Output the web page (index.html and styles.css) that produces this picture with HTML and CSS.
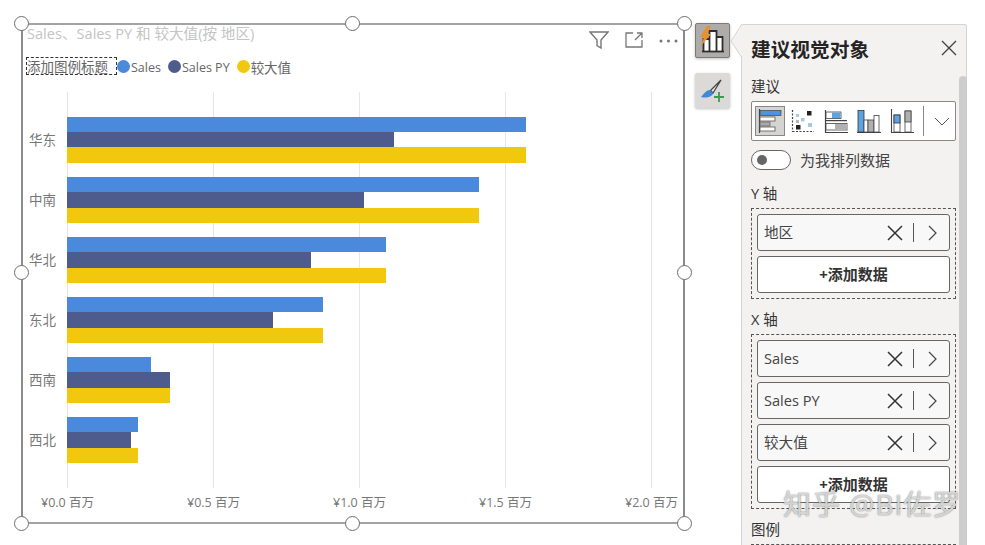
FILE: index.html
```html
<!DOCTYPE html>
<html lang="zh">
<head>
<meta charset="utf-8">
<title>建议视觉对象</title>
<link rel="stylesheet" href="styles.css">
</head>
<body>
<div class="stage">
  <section class="visual">
    <span class="handle h-tl"></span><span class="handle h-tm"></span><span class="handle h-tr"></span>
    <span class="handle h-ml"></span><span class="handle h-mr"></span>
    <span class="handle h-bl"></span><span class="handle h-bm"></span><span class="handle h-br"></span>

    <header class="visual-head">
      <div class="visual-title">Sales、Sales PY 和 较大值(按 地区)</div>
      <div class="visual-tools">
        <svg width="20" height="18" viewBox="0 0 20 18"><path d="M1 1h18l-7 8v8l-4-2.500V9z" fill="none" stroke="#777" stroke-width="1.400"/></svg>
        <svg width="18" height="16" viewBox="0 0 18 16"><path d="M8 1H1v14h16V8M10 8l7-7M12 1h5v5" fill="none" stroke="#777" stroke-width="1.300"/></svg>
        <svg width="19" height="4" viewBox="0 0 19 4"><circle cx="2" cy="2" r="1.500" fill="#777"/><circle cx="9.500" cy="2" r="1.500" fill="#777"/><circle cx="17" cy="2" r="1.500" fill="#777"/></svg>
      </div>
    </header>

    <div class="legend">
      <span class="legend-title">添加图例标题</span>
      <span class="legend-item"><i class="dot c-sales"></i><span class="legend-text">Sales</span></span>
      <span class="legend-item"><i class="dot c-py"></i><span class="legend-text">Sales PY</span></span>
      <span class="legend-item legend-cjk"><i class="dot c-max"></i><span class="legend-text">较大值</span></span>
    </div>

    <div class="chart">
      <div class="row"><span class="cat">华东</span><div class="bars"><i class="bar c-sales" style="width:459px"></i><i class="bar c-py" style="width:327px"></i><i class="bar c-max" style="width:459px"></i></div></div>
      <div class="row"><span class="cat">中南</span><div class="bars"><i class="bar c-sales" style="width:412px"></i><i class="bar c-py" style="width:297px"></i><i class="bar c-max" style="width:412px"></i></div></div>
      <div class="row"><span class="cat">华北</span><div class="bars"><i class="bar c-sales" style="width:319px"></i><i class="bar c-py" style="width:244px"></i><i class="bar c-max" style="width:319px"></i></div></div>
      <div class="row"><span class="cat">东北</span><div class="bars"><i class="bar c-sales" style="width:256px"></i><i class="bar c-py" style="width:206px"></i><i class="bar c-max" style="width:256px"></i></div></div>
      <div class="row"><span class="cat">西南</span><div class="bars"><i class="bar c-sales" style="width:84px"></i><i class="bar c-py" style="width:103px"></i><i class="bar c-max" style="width:103px"></i></div></div>
      <div class="row"><span class="cat">西北</span><div class="bars"><i class="bar c-sales" style="width:71px"></i><i class="bar c-py" style="width:64px"></i><i class="bar c-max" style="width:71px"></i></div></div>
    </div>

    <div class="axis">
      <span>¥0.0 百万</span><span>¥0.5 百万</span><span>¥1.0 百万</span><span>¥1.5 百万</span><span>¥2.0 百万</span>
    </div>
  </section>

  <nav class="rail">
    <button class="rail-btn is-on">
      <svg width="33" height="33" viewBox="0 0 33 33">
        <path d="M7.500 27V15h6v12M13.500 27V7h7v20M20.500 27V13h6v14" fill="#fff" stroke="#2e2e2e" stroke-width="1.800"/>
        <path d="M6 27.500h22" stroke="#2e2e2e" stroke-width="1.800"/>
        <path d="M11 2 4 13h4l-3 9 10-12h-4l4-8z" fill="#e8912c"/>
      </svg>
    </button>
    <button class="rail-btn">
      <svg width="33" height="33" viewBox="0 0 33 33">
        <path d="M25 6 14.500 16.500l2.500 2.500z" fill="#eee" stroke="#444" stroke-width="1.300"/>
        <path d="M14 16c-3.500 0-6 3.500-9 7 3.500 1 7 .5 9-.5s3.500-2.500 3-3.500z" fill="#3f8ad8"/>
        <path d="M23 18v10M18 23h10" stroke="#3f9a4e" stroke-width="1.800"/>
      </svg>
    </button>
  </nav>

  <aside class="panel">
    <svg class="pointer" width="13" height="34" viewBox="0 0 13 34"><path d="M13 0 1 17l12 17z" fill="#f3f2f1"/><path d="M12 0 1 17l11 17" fill="none" stroke="#d4d4d4"/></svg>
    <span class="scrollbar"></span>
    <header class="panel-head">
      <h1>建议视觉对象</h1>
      <svg class="close" width="16" height="16" viewBox="0 0 16 16"><path d="M1 1l14 14M15 1 1 15" stroke="#444" stroke-width="1.400"/></svg>
    </header>

    <div class="label first">建议</div>
    <div class="chart-types">
      <span class="type is-on">
        <svg width="24" height="24" viewBox="0 0 24 24"><path d="M1.500 0v24" stroke="#444" stroke-width="1.200"/><rect x="2" y="1.500" width="21" height="5" fill="#4a94e0" stroke="#444" stroke-width=".7"/><rect x="2" y="8" width="15" height="4" fill="#fff" stroke="#555" stroke-width=".8"/><rect x="2" y="13" width="10" height="4" fill="#aaa" stroke="#666" stroke-width=".8"/><rect x="2" y="18" width="15" height="4" fill="#fff" stroke="#555" stroke-width=".8"/></svg>
      </span>
      <span class="type">
        <svg width="24" height="24" viewBox="0 0 24 24"><path d="M1.500 1v22M1.500 22.500H23" stroke="#444" stroke-width="1.200" stroke-dasharray="2 1.500"/><rect x="16" y="2" width="4.500" height="4.500" fill="#222"/><rect x="5" y="5" width="3" height="3" fill="#a9c8e0"/><rect x="10" y="9" width="3.500" height="3.500" fill="#a9c8e0"/><rect x="5" y="11" width="3" height="3" fill="#b5b5b5"/><rect x="17" y="14" width="4" height="4" fill="#a9c8e0"/><rect x="5" y="16" width="4.500" height="4.500" fill="#222"/></svg>
      </span>
      <span class="type">
        <svg width="24" height="24" viewBox="0 0 24 24"><path d="M1.500 1v22.500H24" fill="none" stroke="#444" stroke-width="1.200"/><rect x="2" y="3" width="15" height="6.500" fill="#fff" stroke="#444" stroke-width=".8"/><rect x="8" y="3.500" width="8.500" height="5.500" fill="#5ea3e0"/><rect x="2" y="11" width="21" height="1.200" fill="#444"/><rect x="2" y="14.500" width="21" height="6.500" fill="#fff" stroke="#444" stroke-width=".8"/><rect x="11" y="15" width="11.500" height="5.500" fill="#b0b0b0"/></svg>
      </span>
      <span class="type">
        <svg width="24" height="24" viewBox="0 0 24 24"><path d="M0 23.500h24" stroke="#444" stroke-width="1.200"/><rect x="1" y="1.500" width="6" height="21.500" fill="#5ea3e0" stroke="#333" stroke-width=".8"/><rect x="7" y="11" width="4" height="12" fill="#fff" stroke="#444" stroke-width=".8"/><rect x="11" y="11" width="6" height="12" fill="#b0b0b0" stroke="#444" stroke-width=".8"/><rect x="17" y="6.500" width="5" height="16.500" fill="#fff" stroke="#444" stroke-width=".8"/></svg>
      </span>
      <span class="type">
        <svg width="24" height="24" viewBox="0 0 24 24"><path d="M1.500 0v24M1 23.500h23" stroke="#444" stroke-width="1.100"/><rect x="4" y="6" width="6" height="17" fill="#fff" stroke="#444" stroke-width=".8"/><rect x="4" y="6" width="6" height="8" fill="#5ea3e0" stroke="#333" stroke-width=".8"/><rect x="15" y="2" width="6" height="21" fill="#fff" stroke="#444" stroke-width=".8"/><rect x="15" y="2" width="6" height="11" fill="#b0b0b0" stroke="#444" stroke-width=".8"/></svg>
      </span>
      <span class="type-sep"></span>
      <svg class="type-more" width="16" height="9" viewBox="0 0 16 9"><path d="M1 1l7 7 7-7" fill="none" stroke="#555" stroke-width="1"/></svg>
    </div>

    <div class="sort">
      <span class="toggle"><i></i></span>
      <span class="sort-text">为我排列数据</span>
    </div>

    <div class="label">Y 轴</div>
    <div class="well">
      <div class="field"><span class="field-name">地区</span>
        <svg width="16" height="16" viewBox="0 0 16 16"><path d="M1 1l14 14M15 1 1 15" stroke="#333" stroke-width="1.500"/></svg><span class="field-sep"></span>
        <svg class="chev" width="9" height="16" viewBox="0 0 9 16"><path d="M1 1l7 7-7 7" fill="none" stroke="#444" stroke-width="1.200"/></svg></div>
      <div class="add">+添加数据</div>
    </div>

    <div class="label">X 轴</div>
    <div class="well">
      <div class="field"><span class="field-name">Sales</span>
        <svg width="16" height="16" viewBox="0 0 16 16"><path d="M1 1l14 14M15 1 1 15" stroke="#333" stroke-width="1.500"/></svg><span class="field-sep"></span>
        <svg class="chev" width="9" height="16" viewBox="0 0 9 16"><path d="M1 1l7 7-7 7" fill="none" stroke="#444" stroke-width="1.200"/></svg></div>
      <div class="field"><span class="field-name">Sales PY</span>
        <svg width="16" height="16" viewBox="0 0 16 16"><path d="M1 1l14 14M15 1 1 15" stroke="#333" stroke-width="1.500"/></svg><span class="field-sep"></span>
        <svg class="chev" width="9" height="16" viewBox="0 0 9 16"><path d="M1 1l7 7-7 7" fill="none" stroke="#444" stroke-width="1.200"/></svg></div>
      <div class="field"><span class="field-name">较大值</span>
        <svg width="16" height="16" viewBox="0 0 16 16"><path d="M1 1l14 14M15 1 1 15" stroke="#333" stroke-width="1.500"/></svg><span class="field-sep"></span>
        <svg class="chev" width="9" height="16" viewBox="0 0 9 16"><path d="M1 1l7 7-7 7" fill="none" stroke="#444" stroke-width="1.200"/></svg></div>
      <div class="add">+添加数据</div>
    </div>

    <div class="label">图例</div>
    <div class="well"></div>
  </aside>

  <div class="watermark">知乎 @BI佐罗</div>
</div>
</body>
</html>
```
FILE: styles.css
```css
* { box-sizing: border-box; }
html, body { margin: 0; height: 100%; background: #fff; overflow: hidden; }
body { font-family: "Open Sans", "Noto Sans CJK SC", sans-serif; color: #333; }

.stage { position: relative; display: flex; align-items: flex-start; width: 985px; height: 545px; padding: 23px 0 0 21px; overflow: hidden; }

/* Visual frame */
.visual { position: relative; width: 664px; height: 501px; flex: none; border: 2px solid #a3a3a3; border-left-color: #8c8c8c; border-right-color: #8c8c8c; background: #fff; }
.handle { position: absolute; width: 15px; height: 15px; border: 1.5px solid #6e6e6e; border-radius: 50%; background: #fff; z-index: 2; }
.h-tl { left: -9.5px; top: -9px; }
.h-tm { left: 322px; top: -9px; }
.h-tr { left: 654px; top: -9px; }
.h-ml { left: -9.5px; top: 240px; }
.h-mr { left: 654px; top: 240px; }
.h-bl { left: -9.5px; top: 491px; }
.h-bm { left: 322px; top: 491px; }
.h-br { left: 654px; top: 491px; }

.visual-head { display: flex; justify-content: space-between; align-items: flex-start; height: 22px; padding: 0 5px 0 4px; }
.visual-title { font-size: 14.600px; line-height: 16px; color: #c4c4c4; white-space: nowrap; }
.visual-tools { display: flex; align-items: center; gap: 16px; height: 24px; margin-top: 3px; }
.visual-tools svg:last-child { margin-top: 2px; }

.legend { display: flex; align-items: center; height: 18px; margin: 10px 0 0 3px; font-size: 12.500px; color: #666; white-space: nowrap; }
.legend-title { width: 91px; height: 18px; line-height: 18px; border: 1px dashed #333; font-size: 13.500px; }
.legend-item { display: flex; align-items: center; gap: 1px; margin-right: 7px; }
.legend-text { margin-top: 2px; }
.legend-cjk { font-size: 13.500px; }
.dot { width: 13px; height: 13px; border-radius: 50%; flex: none; }

.c-sales { background: #4a89dc; }
.c-py { background: #4d5c8c; }
.c-max { background: #f2c80f; }

/* Chart */
.chart { display: grid; grid-template-rows: repeat(6, 60.05px); height: 396px; margin-top: 17px; padding-top: 24.700px; background-image: linear-gradient(to right, #e6e6e6 1px, transparent 1px); background-size: 146px 100%; background-position: 44px 0; background-repeat: repeat-x; }
.row { display: flex; align-items: flex-start; }
.cat { width: 44px; flex: none; height: 46.500px; line-height: 46.500px; padding-left: 6px; font-size: 13.500px; color: #777; }
.bars { display: flex; flex-direction: column; }
.bar { display: block; height: 15.400px; }

.axis { display: flex; justify-content: space-between; width: 637px; margin: 4px 0 0 18px; font-size: 12.500px; color: #777; white-space: nowrap; }

/* Rail */
.rail { display: flex; flex-direction: column; gap: 15px; margin-left: 10px; }
.rail-btn { display: flex; align-items: center; justify-content: center; width: 35px; height: 35px; padding: 0; border: 0; border-radius: 2px; background: #dcdad8; box-shadow: 0 1px 3px rgba(0,0,0,.25); }
.rail-btn.is-on { background: #aeacaa; border: 1px solid #7a7a7a; }

/* Panel */
.panel { position: relative; width: 226px; height: 540px; flex: none; margin: 1px 0 0 11px; padding: 0 10px 0 9px; background: #f3f2f1; border: 1px solid #d4d4d4; border-radius: 2px 2px 0 0; }
.pointer { position: absolute; left: -12px; top: -1px; }
.scrollbar { position: absolute; right: -1px; top: 51px; width: 8px; bottom: 0; background: #cdcdcd; border-radius: 4px 4px 0 0; }
.panel-head { position: relative; display: flex; align-items: center; justify-content: space-between; height: 24px; margin-top: 11px; }
.panel-head h1 { margin: 0; font-size: 19.700px; font-weight: 700; color: #252423; white-space: nowrap; }
.close { margin-right: -1px; }
.label { font-size: 14.500px; line-height: 23px; height: 21px; color: #333; }
.label.first { margin-top: 15px; height: 20px; line-height: 24px; }

.chart-types { display: flex; align-items: center; height: 40px; margin: 6px 0 9px; padding-left: 3px; background: #fff; border: 1px solid #8a8886; border-radius: 2px; }
.type { display: flex; align-items: center; justify-content: center; width: 30px; height: 30px; margin-right: 3px; }
.type.is-on { background: #d6d4d2; border: 1px solid #8a8886; }
.type-sep { width: 1px; height: 30px; margin-left: 2.500px; background: #8a8886; }
.type-more { margin-left: 10px; }

.sort { display: flex; align-items: center; gap: 9px; height: 20px; margin-bottom: 12px; font-size: 15px; color: #444; }
.sort-text { margin-top: -2px; }
.toggle { display: flex; align-items: center; width: 40px; height: 20px; padding-left: 5px; background: #fff; border: 1px solid #666; border-radius: 10px; }
.toggle i { width: 10px; height: 10px; border-radius: 50%; background: #666; }

.well { display: flex; flex-direction: column; gap: 5px; margin: 5px 0 9px; padding: 5px; border: 1px dashed #555; }
.field, .add { height: 37px; flex: none; border: 1px solid #666; border-radius: 3px; font-size: 14.600px; }
.field { display: flex; align-items: center; padding: 0 12px 0 6px; background: #f8f8f8; color: #444; }
.field-name { flex: 1; margin-top: -2px; }
.field-sep { width: 1px; height: 19px; margin: 0 14px 0 10px; background: #555; }
.add { line-height: 35px; text-align: center; background: #fff; font-size: 15px; font-weight: 700; color: #333; }

.watermark { position: absolute; left: 783px; top: 486px; font-size: 28px; line-height: 36px; color: rgba(238,238,238,.8); text-shadow: 0 0 1.500px rgba(80,80,80,.9); white-space: nowrap; z-index: 5; letter-spacing: 1px; }
```
